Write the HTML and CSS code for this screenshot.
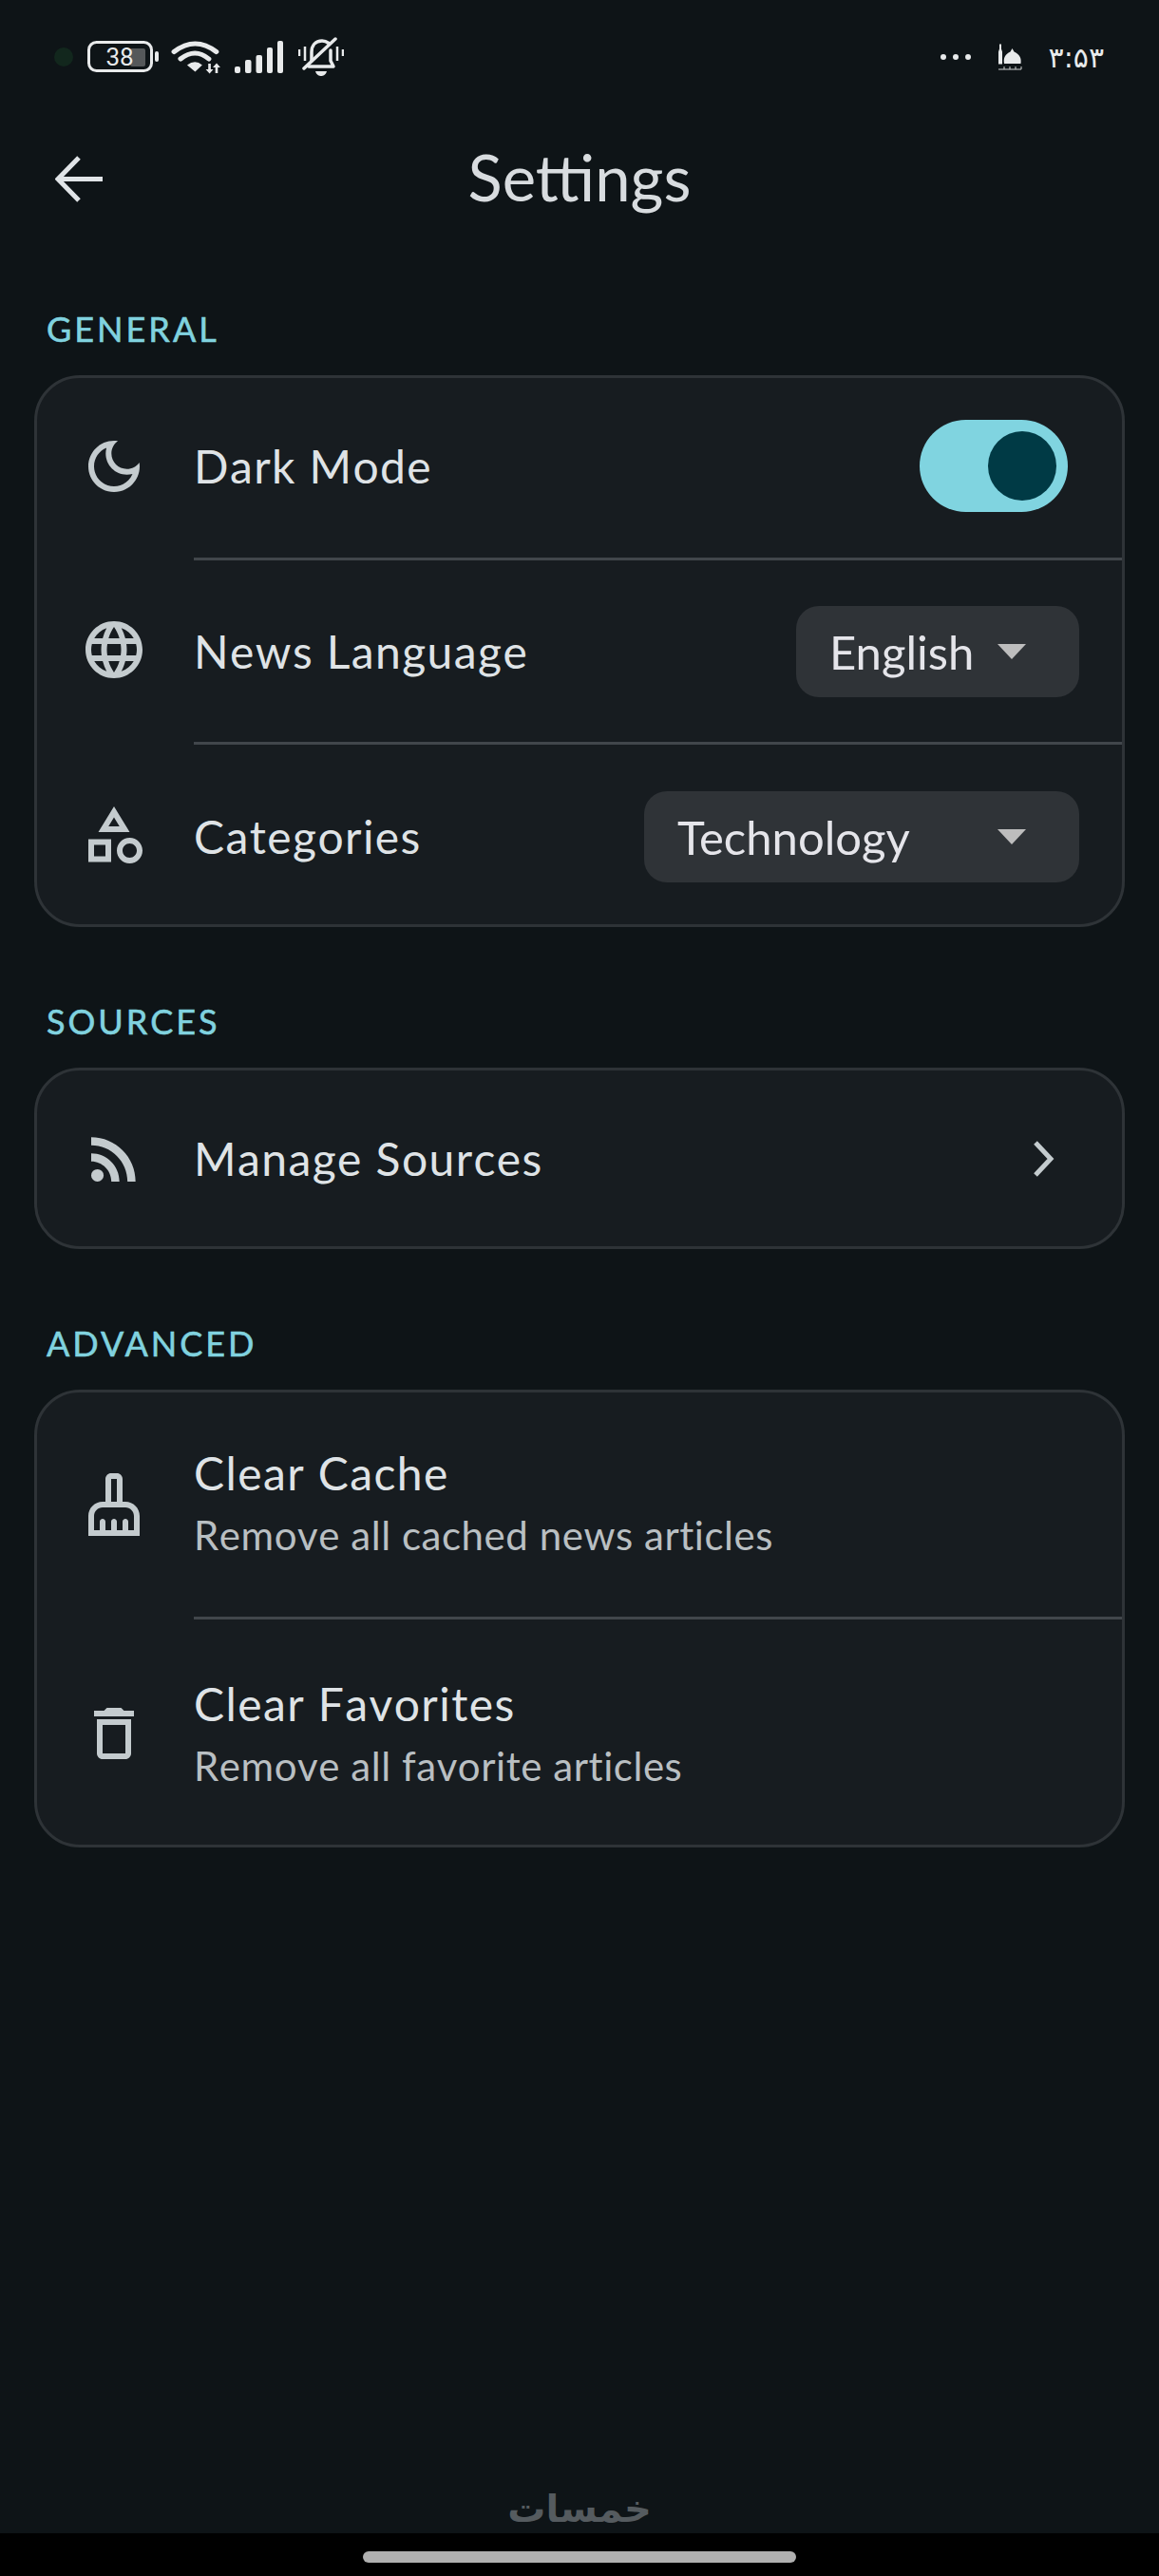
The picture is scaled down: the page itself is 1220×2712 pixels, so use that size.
FILE: index.html
```html
<!DOCTYPE html>
<html lang="en">

<head>
    <meta charset="UTF-8">
    <meta name="viewport" content="width=device-width, initial-scale=1.0">
    <title>Settings</title>
    <link rel="stylesheet" href="styles.css">
</head>

<body>
    <div class="screen">
        <div class="status-bar">
            <div class="status-left">
                <span class="camera-dot"></span>
                <svg class="battery" width="76" height="34" viewBox="0 0 76 34">
                    <rect x="1.5" y="1.5" width="66" height="30" rx="8" fill="none" stroke="#e8eaeb" stroke-width="3"/>
                    <rect x="45" y="8" width="16" height="19" rx="2" fill="#55585a"/>
                    <rect x="71" y="11" width="4" height="11" rx="2" fill="#e8eaeb"/>
                    <text x="34" y="26" text-anchor="middle" class="battery-text">38</text>
                </svg>
                <svg class="wifi" width="53" height="36" viewBox="0 0 50 36" preserveAspectRatio="none">
                    <path d="M3 12.5Q24 -4.5 45 12.5" fill="none" stroke="#e8eaeb" stroke-width="5" stroke-linecap="round"/>
                    <path d="M9.5 20Q24 8 37.5 20" fill="none" stroke="#e8eaeb" stroke-width="5" stroke-linecap="round"/>
                    <path d="M16 26.500Q24 20 31 26.500L24 33.500z" fill="#e8eaeb"/>
                    <path d="M37 25h2.500v6h2.500l-3.700 4.500-3.800-4.500h2.500zM44 35h2.500v-6h2.500l-3.700-4.500-3.800 4.500h2.500z" fill="#e8eaeb"/>
                </svg>
                <svg class="signal" width="51" height="34" viewBox="0 0 51 34">
                    <rect x="0" y="27" width="6" height="7" rx="2" fill="#e8eaeb"/>
                    <rect x="11" y="20" width="6.500" height="14" rx="2" fill="#e8eaeb"/>
                    <rect x="22.500" y="15" width="6.500" height="19" rx="2" fill="#e8eaeb"/>
                    <rect x="34" y="7" width="6" height="27" rx="2" fill="#e8eaeb"/>
                    <rect x="45" y="0" width="6" height="34" rx="2" fill="#e8eaeb"/>
                </svg>
                <svg class="bell" width="48" height="42" viewBox="0 0 48 42">
                    <path d="M1 13v7M7 10v15M47 13v7M41 10v15" fill="none" stroke="#e8eaeb" stroke-width="2.500"/>
                    <path d="M14 25V16C14 9 18 4 25 4c3 0 5 1 7 2.500M34 14v11l3 6H11" fill="none" stroke="#e8eaeb" stroke-width="3.500" stroke-linecap="round" stroke-linejoin="round"/>
                    <path d="M6 33L39 2" stroke="#e8eaeb" stroke-width="3.500" stroke-linecap="round"/>
                    <path d="M18 36h12c-1 4-4 5-6 5s-5-1-6-5z" fill="#e8eaeb"/>
                </svg>
            </div>
            <div class="status-right">
                <div class="dots"><span></span><span></span><span></span></div>
                <svg class="mosque" width="26" height="28" viewBox="0 0 26 28">
                    <path d="M2 0.500v5l-1 3v13h4v-13l-1-3v-5z" fill="#e8eaeb"/>
                    <path d="M7 21c-1-6 1-10 6.500-12.500l2-3.500 2 3.500C23 11 25.500 15 24.500 21z" fill="#e8eaeb"/>
                    <path d="M1 27h24M7 24v3M13 24v3M19 24v3M25 24v3" stroke="#cfd2d3" stroke-width="1" fill="none"/>
                </svg>
                <span class="clock" dir="ltr">۳:۵۳</span>
            </div>
        </div>

        <header class="app-bar">
            <svg class="back" width="50" height="50" viewBox="0 0 50 50">
                <path d="M25 2L3 24.500 25 47M3 24.500H50" fill="none" stroke="#e0e4e7" stroke-width="5"/>
            </svg>
            <h1>Settings</h1>
        </header>

        <main class="content">
            <section>
                <h2>GENERAL</h2>
                <div class="card">
                    <div class="row">
                        <svg class="row-icon icon-first" viewBox="0 0 24 24"><path d="M9.37,5.51C9.19,6.15,9.1,6.82,9.1,7.5c0,4.08,3.32,7.4,7.4,7.4c0.68,0,1.35-0.09,1.99-0.27C17.45,17.19,14.93,19,12,19 c-3.86,0-7-3.14-7-7C5,9.07,6.81,6.55,9.37,5.51z M12,3c-4.97,0-9,4.03-9,9s4.03,9,9,9s9-4.03,9-9c0-0.46-0.04-0.92-0.1-1.36 c-0.98,1.37-2.58,2.26-4.4,2.26c-2.98,0-5.4-2.42-5.4-5.4c0-1.81,0.89-3.42,2.26-4.4C12.92,3.04,12.46,3,12,3L12,3z"/></svg>
                        <div class="row-body row-first">
                            <span class="row-title">Dark Mode</span>
                            <div class="toggle"><span class="thumb"></span></div>
                        </div>
                    </div>
                    <div class="row">
                        <svg class="row-icon" viewBox="0 0 24 24"><path d="M11.99 2C6.47 2 2 6.48 2 12s4.47 10 9.99 10C17.52 22 22 17.52 22 12S17.52 2 11.99 2zm6.93 6h-2.95c-.32-1.25-.78-2.45-1.38-3.56 1.84.63 3.37 1.91 4.33 3.56zM12 4.04c.83 1.2 1.48 2.53 1.91 3.96h-3.82c.43-1.43 1.08-2.76 1.91-3.96zM4.26 14C4.1 13.36 4 12.69 4 12s.1-1.36.26-2h3.38c-.08.66-.14 1.32-.14 2 0 .68.06 1.34.14 2H4.26zm.82 2h2.95c.32 1.25.78 2.45 1.38 3.56-1.84-.63-3.37-1.9-4.33-3.56zm2.95-8H5.08c.96-1.66 2.49-2.93 4.33-3.56C8.81 5.55 8.35 6.75 8.03 8zM12 19.96c-.83-1.2-1.48-2.53-1.91-3.96h3.82c-.43 1.43-1.08 2.76-1.91 3.96zM14.34 14H9.66c-.09-.66-.16-1.32-.16-2 0-.68.07-1.35.16-2h4.68c.09.65.16 1.32.16 2 0 .68-.07 1.34-.16 2zm.25 5.56c.6-1.11 1.06-2.31 1.38-3.56h2.95c-.96 1.65-2.49 2.93-4.33 3.56zM16.36 14c.08-.66.14-1.32.14-2 0-.68-.06-1.34-.14-2h3.38c.16.64.26 1.31.26 2s-.1 1.36-.26 2h-3.38z"/></svg>
                        <div class="row-body divided">
                            <span class="row-title">News Language</span>
                            <div class="dropdown"><span>English</span><span class="caret"></span></div>
                        </div>
                    </div>
                    <div class="row">
                        <svg class="row-icon icon-low" viewBox="0 0 24 24"><path d="M12 2l-5.500 9h11L12 2zm0 3.840L13.930 9h-3.870L12 5.840zM17.500 13c-2.490 0-4.500 2.010-4.500 4.500s2.010 4.500 4.500 4.500 4.500-2.010 4.500-4.500-2.010-4.500-4.500-4.500zm0 7c-1.380 0-2.500-1.120-2.500-2.500s1.120-2.500 2.500-2.500 2.500 1.120 2.500 2.500-1.120 2.500-2.500 2.500zM3 21.500h8v-8H3v8zm2-6h4v4H5v-4z"/></svg>
                        <div class="row-body divided row-end">
                            <span class="row-title">Categories</span>
                            <div class="dropdown dropdown-wide"><span>Technology</span><span class="caret"></span></div>
                        </div>
                    </div>
                </div>
            </section>

            <section>
                <h2>SOURCES</h2>
                <div class="card">
                    <div class="row">
                        <svg class="row-icon" viewBox="0 0 24 24"><circle cx="6.180" cy="17.820" r="2.180"/><path d="M4 4.440v2.830c7.030 0 12.730 5.700 12.730 12.730h2.830c0-8.590-6.970-15.560-15.560-15.560zm0 5.660v2.830c3.900 0 7.070 3.170 7.070 7.070h2.830c0-5.470-4.430-9.900-9.900-9.900z"/></svg>
                        <div class="row-body">
                            <span class="row-title">Manage Sources</span>
                            <svg class="chevron" width="24" height="38" viewBox="0 0 24 38"><path d="M4 2L20 19 4 36" fill="none" stroke="#c4cbce" stroke-width="5"/></svg>
                        </div>
                    </div>
                </div>
            </section>

            <section>
                <h2>ADVANCED</h2>
                <div class="card">
                    <div class="row row-tall">
                        <svg class="row-icon" viewBox="0 0 24 24"><path d="M16,11h-1V3c0-1.100-0.900-2-2-2h-2C9.900,1,9,1.900,9,3v8H8c-2.760,0-5,2.240-5,5v7h18v-7C21,13.240,18.760,11,16,11z M11,3h2v8h-2V3z M19,21h-2v-3c0-0.550-0.450-1-1-1s-1,0.450-1,1v3h-2v-3c0-0.550-0.450-1-1-1s-1,0.450-1,1v3H9v-3c0-0.550-0.450-1-1-1s-1,0.450-1,1v3H5v-5c0-1.650,1.350-3,3-3h8c1.650,0,3,1.350,3,3V21z"/></svg>
                        <div class="row-body row-stack">
                            <span class="row-title">Clear Cache</span>
                            <span class="row-sub">Remove all cached news articles</span>
                        </div>
                    </div>
                    <div class="row row-tall">
                        <svg class="row-icon icon-lower" viewBox="0 0 24 24"><path d="M6 19c0 1.100.9 2 2 2h8c1.100 0 2-.9 2-2V7H6v12zM8 9h8v10H8V9zm7.500-5l-1-1h-5l-1 1H5v2h14V4z"/></svg>
                        <div class="row-body row-stack divided">
                            <span class="row-title">Clear Favorites</span>
                            <span class="row-sub">Remove all favorite articles</span>
                        </div>
                    </div>
                </div>
            </section>

            <div class="watermark" dir="rtl">خمسات</div>
        </main>

        <div class="nav-bar"><span class="nav-handle"></span></div>
    </div>
</body>
</html>
```

FILE: styles.css
```css
* {
    margin: 0;
    padding: 0;
    box-sizing: border-box;
}

body {
    font-family: Lato, "Noto Sans", sans-serif;
    background-color: #000;
}

.screen {
    width: 1220px;
    height: 2712px;
    display: flex;
    flex-direction: column;
    background-color: #0e1417;
    overflow: hidden;
}

/* status bar */
.status-bar {
    height: 120px;
    flex-shrink: 0;
    display: flex;
    justify-content: space-between;
    align-items: center;
    padding: 0 58px 0 57px;
}

.status-left {
    display: flex;
    align-items: center;
}

.camera-dot {
    width: 20px;
    height: 20px;
    border-radius: 50%;
    background-color: #12271d;
    margin-right: 15px;
}

.battery {
    margin-right: 12px;
}

.battery-text {
    font-family: Roboto, sans-serif;
    font-size: 26px;
    fill: #e8eaeb;
}

.wifi {
    margin-right: 14px;
}

.signal {
    margin-right: 16px;
}

.status-right {
    display: flex;
    align-items: center;
}

.dots {
    display: flex;
    gap: 7px;
    margin-right: 28px;
}

.dots span {
    width: 6px;
    height: 6px;
    border-radius: 50%;
    background-color: #e8eaeb;
}

.mosque {
    margin-right: 28px;
}

.clock {
    font-family: "DejaVu Sans", sans-serif;
    font-size: 30px;
    color: #e8eaeb;
}

/* top bar */
.app-bar {
    height: 138px;
    flex-shrink: 0;
    position: relative;
    display: flex;
    justify-content: center;
    align-items: center;
}

.back {
    position: absolute;
    left: 58px;
    top: 44px;
}

h1 {
    margin-top: -6px;
    font-size: 67px;
    font-weight: 400;
    color: #d8dcdf;
}

/* sections */
.content {
    flex: 1;
    display: flex;
    flex-direction: column;
    padding: 63px 36px 0;
}

section {
    margin-bottom: 74px;
}

h2 {
    height: 50px;
    line-height: 50px;
    margin: 0 0 24px 13px;
    font-size: 36px;
    font-weight: 400;
    letter-spacing: 3px;
    -webkit-text-stroke: 0.6px #80d2df;
    color: #80d2df;
}

.card {
    background-color: #171c20;
    border: 3px solid #2e3337;
    border-radius: 48px;
    overflow: hidden;
}

.row {
    display: flex;
    padding-left: 45px;
}

.row-icon {
    width: 72px;
    height: 72px;
    flex-shrink: 0;
    align-self: center;
    margin-right: 48px;
    fill: #c4cbce;
}

.icon-first {
    margin-bottom: 4px;
}

.icon-low {
    margin-top: 4px;
}

.icon-lower {
    margin-top: 6px;
}

.row-body {
    flex: 1;
    min-height: 185px;
    display: flex;
    justify-content: space-between;
    align-items: center;
    padding-right: 45px;
}

.row-first {
    min-height: 189px;
    padding-bottom: 4px;
}

.divided {
    border-top: 3px solid #41464b;
    min-height: 194px;
}

.row-end {
    min-height: 192px;
    padding-top: 4px;
}

.row-title {
    font-size: 48px;
    font-kerning: none;
    letter-spacing: 1.400px;
    color: #dfe3e6;
}

.row-tall .row-body {
    min-height: 240px;
}

.row-tall:first-child .row-body {
    min-height: 236px;
}

.row-stack {
    flex-direction: column;
    align-items: flex-start;
    justify-content: center;
    gap: 12px;
    padding-bottom: 5px;
}

.row-stack.divided {
    padding-top: 2px;
    padding-bottom: 0;
}

.row-sub {
    font-size: 42px;
    font-kerning: none;
    letter-spacing: 0.550px;
    color: #b9bfc2;
}

/* controls */
.toggle {
    width: 156px;
    height: 97px;
    margin-right: 12px;
    padding: 12px;
    display: flex;
    justify-content: flex-end;
    border-radius: 49px;
    background-color: #80d4e0;
}

.thumb {
    width: 72px;
    height: 73px;
    border-radius: 50%;
    background-color: #003a45;
}

.dropdown {
    width: 298px;
    height: 96px;
    display: flex;
    justify-content: space-between;
    align-items: center;
    padding: 0 56px 0 35px;
    border-radius: 24px;
    background-color: #2f3337;
    font-size: 49px;
    color: #e5e5ea;
}

.dropdown-wide {
    width: 458px;
}

.caret {
    width: 0;
    height: 0;
    border-left: 15px solid transparent;
    border-right: 15px solid transparent;
    border-top: 16px solid #bdbdbd;
}

.chevron {
    margin-right: 26px;
}

/* bottom */
.watermark {
    margin-top: auto;
    margin-bottom: -4px;
    height: 60px;
    line-height: 60px;
    text-align: center;
    font-family: "DejaVu Sans", sans-serif;
    font-size: 40px;
    font-weight: bold;
    color: #555b5f;
}

.nav-bar {
    position: relative;
    height: 45px;
    flex-shrink: 0;
    display: flex;
    justify-content: center;
    padding-top: 19px;
    background-color: #000;
}

.nav-handle {
    width: 456px;
    height: 12px;
    border-radius: 6px;
    background-color: #b0b0b0;
}
```
